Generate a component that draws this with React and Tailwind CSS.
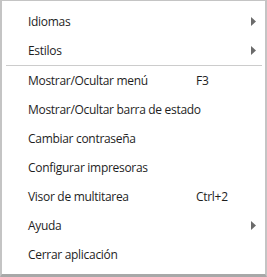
import React from "react";

const Arrow = () => (
  <svg width="5" height="9" viewBox="0 0 5 9" className="block">
    <path d="M0 0 L5 4.5 L0 9 Z" fill="#6b6b6b" />
  </svg>
);

const Row = ({ label, shortcut, sub }) => (
  <div className="flex h-[29px] items-center pl-[26px] pr-[9px] text-[12px] tracking-[-0.3px] text-[#1e1e1e]">
    <span className="w-[168px] shrink-0 whitespace-nowrap">{label}</span>
    <span className="whitespace-nowrap">{shortcut}</span>
    <span className="ml-auto">{sub ? <Arrow /> : null}</span>
  </div>
);

export default function App() {
  return (
    <div
      className="w-[267px] h-[277px] bg-white border-t border-t-[#c4c4c4] border-l-2 border-l-[#c4c4c4] border-r-2 border-r-[#c4c4c4] border-b-[3px] border-b-[#a8a8a8] pt-[6px]"
      style={{ fontFamily: '"Open Sans", "Noto Sans", sans-serif' }}
    >
      <Row label="Idiomas" sub />
      <Row label="Estilos" sub />
      <div className="h-px bg-[#cccccc] ml-[4px] mr-[3px]" />
      <Row label="Mostrar/Ocultar menú" shortcut="F3" />
      <Row label="Mostrar/Ocultar barra de estado" />
      <Row label="Cambiar contraseña" />
      <Row label="Configurar impresoras" />
      <Row label="Visor de multitarea" shortcut="Ctrl+2" />
      <Row label="Ayuda" sub />
      <Row label="Cerrar aplicación" />
    </div>
  );
}
